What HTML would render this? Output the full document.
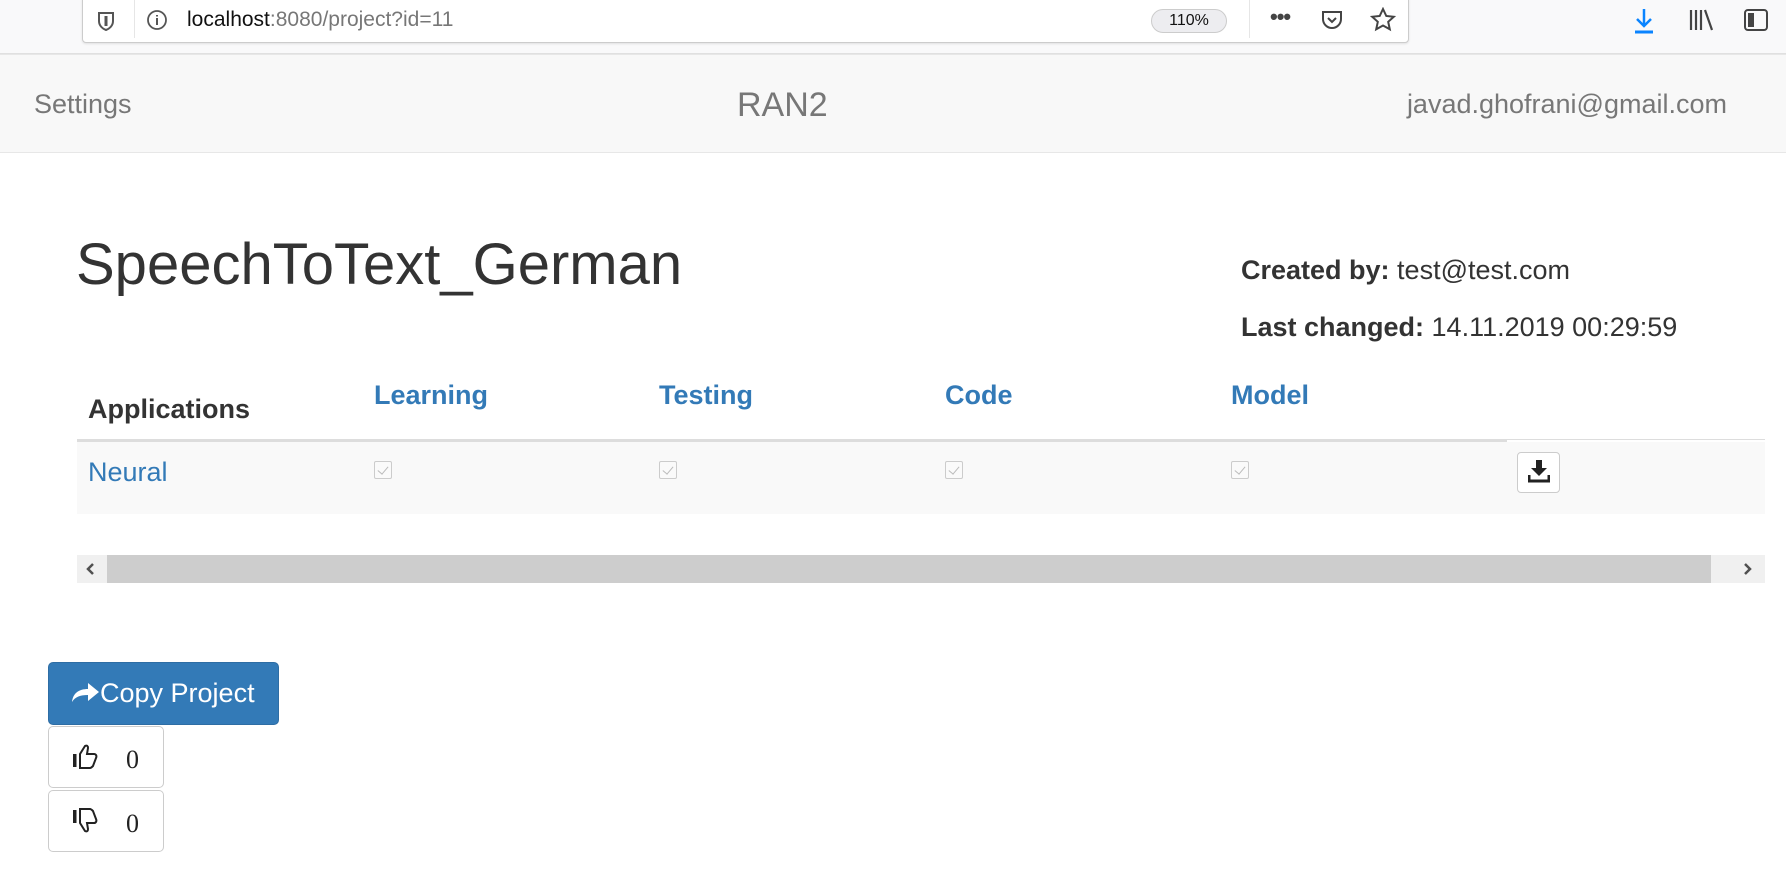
<!DOCTYPE html>
<html><head><meta charset="utf-8"><style>
*{box-sizing:border-box;margin:0;padding:0}
body{width:1786px;height:871px;background:#fff;font-family:"Liberation Sans",sans-serif;position:relative;overflow:hidden;color:#333}
.a{position:absolute;white-space:nowrap}
.blue{color:#337ab7}
.cb{position:absolute;top:461px;width:18px;height:18px;border:1px solid #ccc;background:#fafafa;border-radius:2px}
.cb:after{content:"";position:absolute;left:5px;top:2px;width:5px;height:9px;border:solid #bbb;border-width:0 1.5px 1.5px 0;transform:rotate(40deg)}
.th{font-weight:bold;font-size:27px}
</style></head><body>
<div class="a" style="left:0;top:0;width:1786px;height:54px;background:#f9f9fa;border-bottom:1px solid #e0e0e0"></div>
<div class="a" style="left:82px;top:-2px;width:1327px;height:45px;background:#fff;border:1px solid #ccc;border-radius:0 0 4px 4px;box-shadow:0 1px 2px rgba(0,0,0,.1)"></div>
<svg class="a" style="left:96px;top:10px" width="20" height="22" viewBox="0 0 20 22"><path d="M3 3h14v8c0 5-4 8-7 9-3-1-7-4-7-9z" fill="none" stroke="#555" stroke-width="2"/><path d="M10 6v10" stroke="#555" stroke-width="3"/></svg>
<div class="a" style="left:134px;top:0;width:1px;height:38px;background:#e6e6e6"></div>
<svg class="a" style="left:146px;top:9px" width="22" height="22"><circle cx="11" cy="11" r="9" fill="none" stroke="#555" stroke-width="1.8"/><path d="M11 9v7M11 6v1.5" stroke="#555" stroke-width="2"/></svg>
<div class="a" style="left:187px;top:8px;font-size:21px;color:#111">localhost<span style="color:#777">:8080/project?id=11</span></div>
<div class="a" style="left:1151px;top:9px;width:76px;height:24px;border-radius:12px;background:#ededf0;border:1px solid #ccc;font-size:16px;text-align:center;line-height:22px;color:#111">110%</div>
<div class="a" style="left:1249px;top:0;width:1px;height:38px;background:#e6e6e6"></div>
<div class="a" style="left:1270px;top:4px;font-size:22px;color:#444;font-weight:bold;letter-spacing:-1px">•••</div>
<svg class="a" style="left:1320px;top:8px" width="24" height="24"><path d="M3 4h18v7a9 9 0 0 1-18 0z" fill="none" stroke="#444" stroke-width="2"/><path d="M8 10l4 4 4-4" fill="none" stroke="#444" stroke-width="2"/></svg>
<svg class="a" style="left:1370px;top:7px" width="26" height="26"><path d="M13 2l3.3 7 7.5.8-5.6 5 1.6 7.5L13 18.5 6.2 22.3l1.6-7.5-5.6-5 7.5-.8z" fill="none" stroke="#444" stroke-width="2"/></svg>
<svg class="a" style="left:1632px;top:7px" width="24" height="28"><path d="M12 2v17M5 12l7 7 7-7" fill="none" stroke="#0a84ff" stroke-width="2.5"/><path d="M3 25h18" stroke="#0a84ff" stroke-width="3"/></svg>
<svg class="a" style="left:1688px;top:8px" width="28" height="24"><path d="M3 2v20M8 2v20M13 2v20M17 2l7 20" stroke="#444" stroke-width="2.2" fill="none"/></svg>
<svg class="a" style="left:1743px;top:8px" width="26" height="24"><rect x="2" y="2" width="22" height="20" rx="3" fill="none" stroke="#444" stroke-width="2"/><rect x="5" y="5" width="6" height="14" fill="#444"/></svg>
<div class="a" style="left:0;top:54px;width:1786px;height:99px;background:#f8f8f8;border-top:1px solid #e7e7e7;border-bottom:1px solid #e7e7e7"></div>
<div class="a" style="left:34px;top:89px;font-size:27px;color:#777">Settings</div>
<div class="a" style="left:737px;top:86px;font-size:34px;color:#777">RAN2</div>
<div class="a" style="right:59px;top:89px;font-size:27px;color:#777">javad.ghofrani@gmail.com</div>
<div class="a" style="left:76px;top:231px;font-size:58px;color:#333">SpeechToText_German</div>
<div class="a" style="left:1241px;top:255px;font-size:27px;color:#333"><b>Created by:</b> test@test.com</div>
<div class="a" style="left:1241px;top:312px;font-size:27px;color:#333"><b>Last changed:</b> 14.11.2019 00:29:59</div>
<div class="a th" style="left:88px;top:394px;color:#333">Applications</div>
<div class="a th blue" style="left:374px;top:380px">Learning</div>
<div class="a th blue" style="left:659px;top:380px">Testing</div>
<div class="a th blue" style="left:945px;top:380px">Code</div>
<div class="a th blue" style="left:1231px;top:380px">Model</div>
<div class="a" style="left:77px;top:439px;width:1430px;height:3px;background:#ddd"></div>
<div class="a" style="left:1507px;top:439px;width:258px;height:1px;background:#ddd"></div>
<div class="a" style="left:77px;top:442px;width:1688px;height:72px;background:#f9f9f9"></div>
<div class="a blue" style="left:88px;top:457px;font-size:27px">Neural</div>
<div class="cb" style="left:374px"></div>
<div class="cb" style="left:659px"></div>
<div class="cb" style="left:945px"></div>
<div class="cb" style="left:1231px"></div>
<div class="a" style="left:1517px;top:452px;width:43px;height:41px;background:#fff;border:1px solid #ccc;border-radius:4px"></div>
<svg class="a" style="left:1528px;top:460px" width="22" height="24"><path d="M8 0h6v8h5l-8 8-8-8h5z" fill="#222"/><path d="M1 15v6h20v-6" fill="none" stroke="#222" stroke-width="3"/></svg>
<div class="a" style="left:77px;top:555px;width:1688px;height:28px;background:#f0f0f0"></div>
<div class="a" style="left:107px;top:555px;width:1604px;height:28px;background:#cdcdcd"></div>
<svg class="a" style="left:85px;top:562px" width="12" height="14"><path d="M8 2L3 7l5 5" fill="none" stroke="#505050" stroke-width="2.5"/></svg>
<svg class="a" style="left:1742px;top:562px" width="12" height="14"><path d="M3 2l5 5-5 5" fill="none" stroke="#505050" stroke-width="2.5"/></svg>
<div class="a" style="left:48px;top:662px;width:231px;height:63px;background:#337ab7;border:1px solid #2e6da4;border-radius:5px"></div>
<svg class="a" style="left:71px;top:680px" width="30" height="24"><path d="M1 22c1-9 7-13 16-13V3l11 9-11 9v-6C9 15 4 17 1 22z" fill="#fff"/></svg>
<div class="a" style="left:100px;top:678px;font-size:27px;color:#fff">Copy Project</div>
<div class="a" style="left:48px;top:726px;width:116px;height:62px;background:#fff;border:1px solid #ccc;border-radius:5px"></div>
<div class="a" style="left:48px;top:790px;width:116px;height:62px;background:#fff;border:1px solid #ccc;border-radius:5px"></div>
<svg class="a" style="left:72px;top:743px" width="30" height="28"><rect x="1" y="11" width="3.5" height="13" fill="#222"/><path d="M8 11l5-8c2-1 3 0 3 2l-1 6h7c2 0 3 2 2 4l-3 8c-1 1-2 2-3 2H8z" fill="none" stroke="#222" stroke-width="2"/></svg>
<svg class="a" style="left:72px;top:807px" width="30" height="28"><rect x="1" y="3" width="3.5" height="13" fill="#222"/><path d="M8 16l5 8c2 1 3 0 3-2l-1-6h7c2 0 3-2 2-4l-3-8c-1-1-2-2-3-2H8z" fill="none" stroke="#222" stroke-width="2"/></svg>
<div class="a" style="left:126px;top:745px;font-size:26px;font-family:'Liberation Serif',serif;color:#222">0</div>
<div class="a" style="left:126px;top:809px;font-size:26px;font-family:'Liberation Serif',serif;color:#222">0</div>
</body></html>
